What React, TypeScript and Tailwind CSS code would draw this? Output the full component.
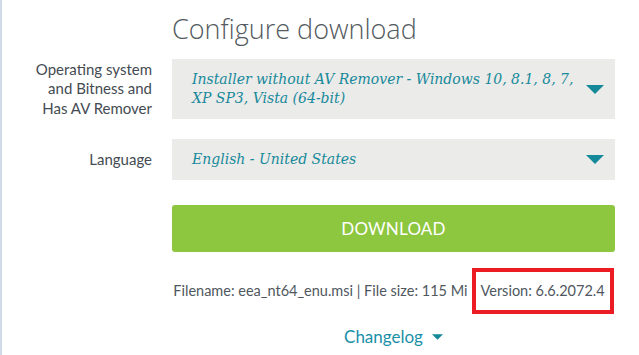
const sans = "font-['Lato',_'Liberation_Sans',_sans-serif]";
const title = "font-['Open_Sans',_'Liberation_Sans',_sans-serif]";
const serif = "font-['DejaVu_Serif',_'Liberation_Serif',_serif]";

function Caret({ className }: { className: string }) {
  return (
    <svg viewBox="0 0 18 9" className={className} aria-hidden="true">
      <path d="M0 0H18L9 9Z" fill="currentColor" />
    </svg>
  );
}

function FakeSelect({ value, tall }: { value: string; tall?: boolean }) {
  return (
    <div
      className={`flex items-center bg-[#ebebe9] pl-5 pr-[11px] ${tall ? "h-[60px]" : "h-[41px]"}`}
    >
      <span className={`${serif} flex-1 pr-1 text-[14px] italic leading-[19px] text-[#17899b]`}>
        {value}
      </span>
      <Caret className="h-[9px] w-[18px] text-[#15889a]" />
    </div>
  );
}

export default function App() {
  return (
    <div className={`${sans} min-h-[355px] border-l-2 border-[#cfdbe9] bg-white`}>
      <div className="grid grid-cols-[150px_443px] gap-x-5 pt-[10px]">
        {/* title */}
        <div />
        <h1 className={`${title} text-[27px] font-light leading-[38px] text-[#535a61]`}>
          Configure download
        </h1>

        {/* os select */}
        <label className="mt-[11px] self-center text-right text-[15px] leading-[19.5px] text-[#444b52]">
          Operating system
          <br />
          and Bitness and
          <br />
          Has AV Remover
        </label>
        <div className="mt-[11px]">
          <FakeSelect
            tall
            value="Installer without AV Remover - Windows 10, 8.1, 8, 7, XP SP3, Vista (64-bit)"
          />
        </div>

        {/* language */}
        <label className="mt-5 self-center text-right text-[15px] text-[#444b52]">Language</label>
        <div className="mt-5">
          <FakeSelect value="English - United States" />
        </div>

        {/* download */}
        <div />
        <button
          type="button"
          className="mt-[25px] h-[47px] rounded-[3px] bg-[#8dc63f] text-[17px] tracking-[0.2px] text-white"
        >
          DOWNLOAD
        </button>

        {/* file info */}
        <div />
        <div className="mt-4 flex items-center justify-center whitespace-nowrap text-[14.5px] text-[#50575e]">
          <span>Filename: eea_nt64_enu.msi | File size: 115 Mi</span>
          <span className="ml-1 border-4 border-[#ec1c24] px-[5px] py-[9px] leading-5">
            Version: 6.6.2072.4
          </span>
        </div>

        {/* changelog */}
        <div />
        <div className="mt-[10px] flex items-center justify-center gap-[9px] text-[17px] text-[#1a8fa8]">
          <span>Changelog</span>
          <Caret className="h-[6px] w-[11px] text-[#15889a]" />
        </div>
      </div>
    </div>
  );
}
